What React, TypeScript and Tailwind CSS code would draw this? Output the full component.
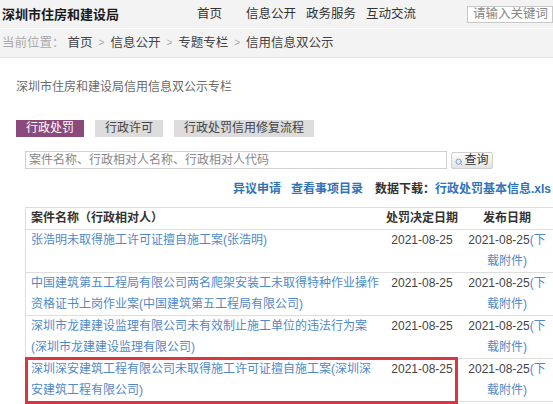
import { Search } from 'lucide-react';

const rows = [
  { name: '张浩明未取得施工许可证擅自施工案(张浩明)', date: '2021-08-25' },
  { name: '中国建筑第五工程局有限公司两名爬架安装工未取得特种作业操作资格证书上岗作业案(中国建筑第五工程局有限公司)', date: '2021-08-25' },
  { name: '深圳市龙建建设监理有限公司未有效制止施工单位的违法行为案(深圳市龙建建设监理有限公司)', date: '2021-08-25' },
  { name: '深圳深安建筑工程有限公司未取得施工许可证擅自施工案(深圳深安建筑工程有限公司)', date: '2021-08-25', marked: true },
];

const font = { fontFamily: '"Liberation Sans", "Noto Sans CJK SC", sans-serif' };

export default function App() {
  return (
    <div className="w-[553px] h-[404px] overflow-hidden bg-white text-[12px]" style={font}>
      {/* top bar */}
      <div className="h-[28px] bg-[#f3f3f3] flex items-center">
        <div className="pl-[2px] w-[197px] text-[13px] font-bold text-[#1a1a1a] leading-none">深圳市住房和建设局</div>
        <div className="flex items-center text-[12.5px] text-[#333] leading-none">
          <span className="mr-[24px]">首页</span>
          <span className="mr-[10px]">信息公开</span>
          <span className="mr-[10px]">政务服务</span>
          <span>互动交流</span>
        </div>
        <div className="ml-auto mt-[1px] w-[86px] h-[17px] border border-[#c8c8c8] bg-white pl-[5px] text-[12.5px] leading-[15px] text-[#888] whitespace-nowrap overflow-hidden">
          请输入关键词
        </div>
      </div>

      {/* breadcrumb */}
      <div className="mt-[1px] h-[29px] bg-[#f3f3f3] border-b border-[#e6e6e6] flex items-center pl-[2px] text-[12.5px] leading-none">
        <span className="text-[#aaa]">当前位置：</span>
        <span className="ml-[3px] text-[#444]">首页</span>
        <span className="mx-[6px] text-[#aaa] text-[10px]">&gt;</span>
        <span className="text-[#444]">信息公开</span>
        <span className="mx-[6px] text-[#aaa] text-[10px]">&gt;</span>
        <span className="text-[#444]">专题专栏</span>
        <span className="mx-[6px] text-[#aaa] text-[10px]">&gt;</span>
        <span className="text-[#444]">信用信息双公示</span>
      </div>

      {/* column title */}
      <div className="pl-[16px] pt-[22px] text-[12px] leading-[14px] text-[#6a6a6a]">深圳市住房和建设局信用信息双公示专栏</div>

      {/* tabs */}
      <div className="pl-[16px] mt-[26px] flex gap-[11px] text-[12px] leading-[17px]">
        <span className="px-[10px] bg-[#8a4a7c] text-white">行政处罚</span>
        <span className="px-[10px] bg-[#dcdcdc] text-[#444]">行政许可</span>
        <span className="px-[10px] bg-[#dcdcdc] text-[#444]">行政处罚信用修复流程</span>
      </div>

      {/* search */}
      <div className="pl-[25px] mt-[14px] flex items-center gap-[4px]">
        <div className="w-[422px] h-[18px] border border-[#d0d0d0] pl-[3px] text-[12px] leading-[16px] text-[#888]">
          案件名称、行政相对人名称、行政相对人代码
        </div>
        <button className="w-[42px] h-[17px] border border-[#cfcfcf] rounded-[2px] bg-gradient-to-b from-[#fcfcfc] to-[#e4e4e4] flex items-center justify-center gap-[1px] text-[12px] leading-none text-[#333]">
          <Search size={8} strokeWidth={3} className="text-[#6fa0d8] mt-[4px]" />
          查询
        </button>
      </div>

      {/* links */}
      <div className="mt-[13px] pr-[2px] flex justify-end items-center text-[12px] leading-[14px] font-bold whitespace-nowrap">
        <span className="text-[#2f73b9]">异议申请</span>
        <span className="ml-[10px] text-[#2f73b9]">查看事项目录</span>
        <span className="ml-[12px] text-[#333]">数据下载：</span>
        <span className="text-[#2f73b9]">行政处罚基本信息.xls</span>
      </div>

      {/* table */}
      <div className="ml-[25px] mt-[11px] w-[528px] border-l border-t border-[#dedede] text-[12px] leading-[21px]">
        <div className="flex border-b border-[#dedede] font-bold text-[#333]">
          <div className="w-[357px] pl-[5px]">案件名称（行政相对人）</div>
          <div className="w-[78px] text-center">处罚决定日期</div>
          <div className="w-[92px] text-center">发布日期</div>
        </div>
        {rows.map((r) => (
          <div key={r.name} className="relative flex border-b border-[#dedede]">
            <div className="w-[357px] pl-[5px] pr-[4px] text-[#5089c8] break-all">{r.name}</div>
            <div className="w-[78px] text-center text-[#444]">{r.date}</div>
            <div className="w-[92px] px-[5px] text-center text-[#444]">
              {r.date}
              <span className="text-[#5089c8]">(下载附件)</span>
            </div>
            {r.marked && (
              <div className="absolute left-[-1px] top-[-2px] w-[433px] bottom-[-3px] border-[3px] border-[#d9363e]" />
            )}
          </div>
        ))}
      </div>
    </div>
  );
}
